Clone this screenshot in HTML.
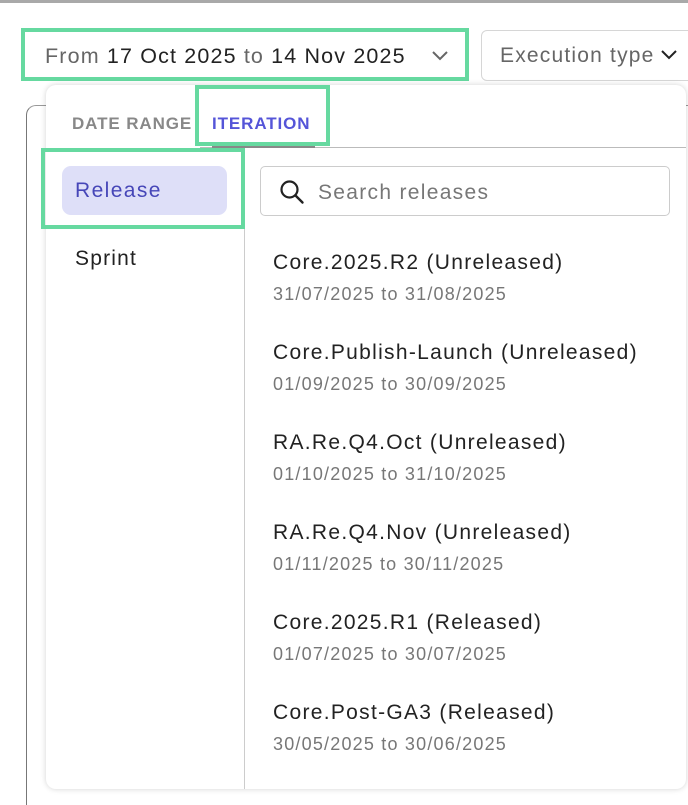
<!DOCTYPE html>
<html><head><meta charset="utf-8"><style>
*{box-sizing:border-box;margin:0;padding:0}
body{width:688px;height:790px;background:#fff;font-family:"Liberation Sans",sans-serif;position:relative;overflow:hidden}
.abs{position:absolute}
.topline{left:0;top:0;width:688px;height:3px;background:#a9a9a9}
.gbox{border:4px solid #66d9a0}
.datebtn{left:21px;top:28px;width:448px;height:53px;background:#fff}
.datebtn .t{position:absolute;left:20px;top:12px;font-size:21.5px;letter-spacing:1.15px;color:#222;white-space:nowrap}
.datebtn .g{color:#666}
.exec{left:481px;top:30px;width:220px;height:51px;border:1px solid #d6d6d6;border-radius:6px;background:#fff}
.exec .t{position:absolute;left:18px;top:13px;font-size:21px;letter-spacing:1.2px;color:#666;white-space:nowrap}
.card{left:26px;top:105px;width:700px;height:700px;border-left:1.5px solid #777;border-top:1.5px solid #999;border-top-left-radius:10px}
.pop{left:46px;top:85px;width:640px;height:704px;background:#fff;border-radius:10px;box-shadow:0 0 6px rgba(0,0,0,.18)}
.tab{position:absolute;top:114px;font-size:17px;font-weight:bold;letter-spacing:0.9px}
.hline{left:200px;top:147px;width:486px;height:1px;background:#bbb}
.vline{left:244px;top:148px;width:1px;height:641px;background:#ccc}
.pill{left:62px;top:166px;width:165px;height:49px;background:#dedff8;border-radius:9px;color:#4646b8;font-size:21px;letter-spacing:1.4px;padding:13px 0 0 13px}
.search{left:260px;top:166px;width:410px;height:50px;border:1px solid #ccc;border-radius:5px}
.search .t{position:absolute;left:57px;top:14px;font-size:21px;letter-spacing:1.3px;color:#777;white-space:nowrap}
.it{left:273px;font-size:21px;letter-spacing:1.3px;color:#222;white-space:nowrap}
.sub{left:273px;font-size:18px;letter-spacing:1.2px;color:#777;white-space:nowrap}
</style></head><body>
<div class="abs topline"></div>
<div class="abs card"></div>
<div class="abs exec"><span class="t">Execution type</span>
<svg class="abs" style="left:178px;top:18px" width="18" height="12" viewBox="0 0 18 12"><path d="M2 2l7 7 7-7" fill="none" stroke="#222" stroke-width="2"/></svg></div>
<div class="abs datebtn gbox"><span class="t"><span class="g">From</span> 17 Oct 2025 <span class="g">to</span> 14 Nov 2025</span>
<svg class="abs" style="left:406px;top:18px" width="18" height="12" viewBox="0 0 18 12"><path d="M2 2l7 7 7-7" fill="none" stroke="#666" stroke-width="2"/></svg></div>
<div class="abs pop"></div>
<div class="tab" style="left:72px;color:#888">DATE RANGE</div>
<div class="tab" style="left:212px;color:#5555d8">ITERATION</div>
<div class="abs hline"></div>
<div class="abs" style="left:212px;top:146px;width:103px;height:2px;background:#888"></div>
<div class="abs gbox" style="left:195px;top:85px;width:135px;height:61px"></div>
<div class="abs vline"></div>
<div class="abs pill">Release</div>
<div class="abs gbox" style="left:41px;top:148px;width:204px;height:81px"></div>
<div class="abs" style="left:75px;top:247px;font-size:21px;letter-spacing:1.2px;color:#222">Sprint</div>
<div class="abs search">
<svg class="abs" style="left:18px;top:12px" width="26" height="26" viewBox="0 0 26 26"><circle cx="10.5" cy="10.5" r="8" fill="none" stroke="#222" stroke-width="2.2"/><path d="M16.5 16.5l7 7" stroke="#222" stroke-width="2.4" stroke-linecap="round"/></svg>
<span class="t">Search releases</span></div>
<div class="abs it" style="top:251px">Core.2025.R2 (Unreleased)</div>
<div class="abs sub" style="top:284px">31/07/2025 to 31/08/2025</div>
<div class="abs it" style="top:341px">Core.Publish-Launch (Unreleased)</div>
<div class="abs sub" style="top:374px">01/09/2025 to 30/09/2025</div>
<div class="abs it" style="top:431px">RA.Re.Q4.Oct (Unreleased)</div>
<div class="abs sub" style="top:464px">01/10/2025 to 31/10/2025</div>
<div class="abs it" style="top:521px">RA.Re.Q4.Nov (Unreleased)</div>
<div class="abs sub" style="top:554px">01/11/2025 to 30/11/2025</div>
<div class="abs it" style="top:611px">Core.2025.R1 (Released)</div>
<div class="abs sub" style="top:644px">01/07/2025 to 30/07/2025</div>
<div class="abs it" style="top:701px">Core.Post-GA3 (Released)</div>
<div class="abs sub" style="top:734px">30/05/2025 to 30/06/2025</div>
</body></html>
